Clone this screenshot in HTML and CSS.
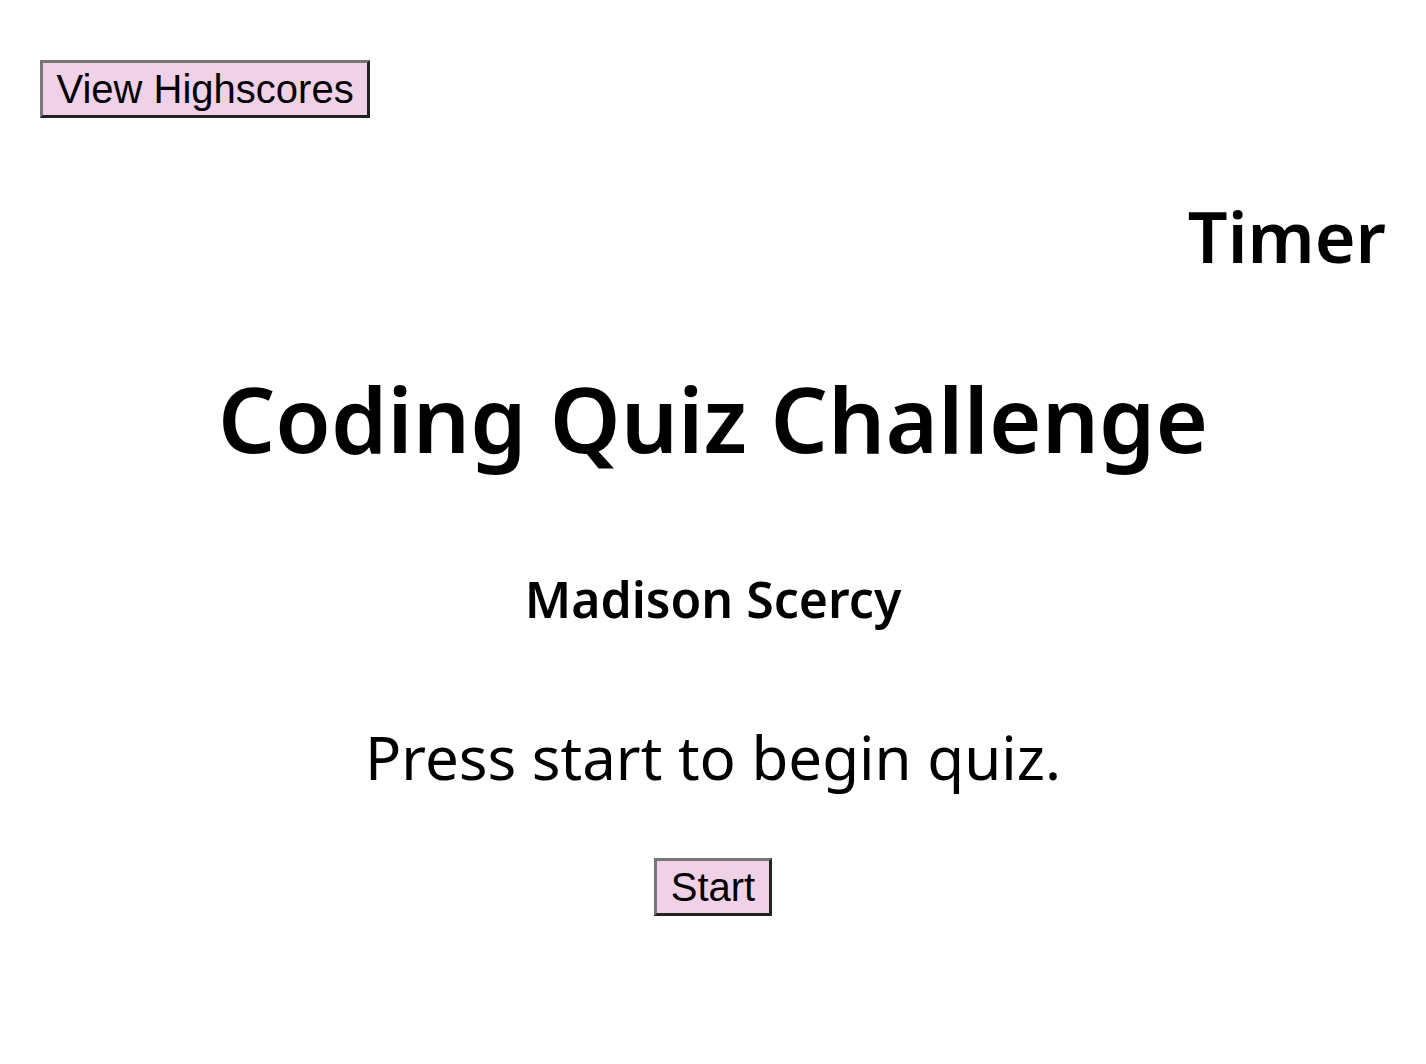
FILE: index.html
```html
<!DOCTYPE html>
<html lang="en">
<head>
<meta charset="utf-8">
<title>Coding Quiz Challenge</title>
<link rel="stylesheet" href="styles.css">
</head>
<body>
<header class="top">
  <button class="btn">View Highscores</button>
</header>
<h2 class="timer">Timer</h2>
<main class="intro">
  <h1 class="title">Coding Quiz Challenge</h1>
  <h3 class="author">Madison Scercy</h3>
  <p class="lead">Press start to begin quiz.</p>
  <button class="btn">Start</button>
</main>
</body>
</html>
```
FILE: styles.css
```css
html, body {
  margin: 0;
  padding: 0;
  background: #ffffff;
}
body {
  font-family: "Noto Sans", "Open Sans", sans-serif;
  color: #000;
}
.top {
  padding: 60px 40px 0;
  display: flex;
}
.btn {
  font-family: "Liberation Sans", Arial, sans-serif;
  font-size: 40px;
  line-height: 46px;
  color: #000;
  background: #f0d1e8;
  border: 3px solid;
  border-color: #767676 #222222 #222222 #767676;
  padding: 3px 13.5px;
  margin: 0;
  border-radius: 0;
}
.timer {
  margin: 71px 0 0;
  padding-right: 40px;
  text-align: right;
  font-size: 70px;
  font-weight: 600;
  line-height: 95px;
}
.intro {
  display: flex;
  flex-direction: column;
  align-items: center;
  text-align: center;
}
.title {
  margin: 73px 0 0;
  font-size: 90px;
  font-weight: 600;
  line-height: 123px;
}
.author {
  margin: 85px 0 0;
  font-size: 50px;
  font-weight: 600;
  line-height: 68px;
}
.lead {
  margin: 83px 0 0;
  font-size: 60px;
  font-weight: 400;
  line-height: 82px;
}
.intro .btn {
  margin-top: 60px;
}
```
